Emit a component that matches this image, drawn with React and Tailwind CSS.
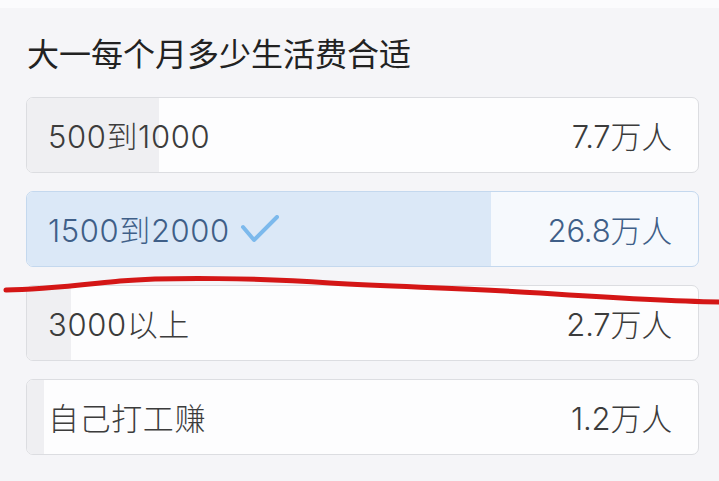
import React from "react";

const options = [
  { label: "500到1000", count: "7.7万人", fill: 132, selected: false },
  { label: "1500到2000", count: "26.8万人", fill: 464, selected: true },
  { label: "3000以上", count: "2.7万人", fill: 44, selected: false },
  { label: "自己打工赚", count: "1.2万人", fill: 17, selected: false },
];

function Check() {
  return (
    <svg width="40" height="30" viewBox="0 0 40 30" className="ml-[10px] mt-[-4px]">
      <path d="M3 12 L14 25 L37 2" fill="none" stroke="#7cb9ec" strokeWidth="4" strokeLinecap="round" strokeLinejoin="round" />
    </svg>
  );
}

function Option({ o }) {
  return (
    <div
      className={
        "relative h-[76px] rounded-[7px] border overflow-hidden " +
        (o.selected ? "border-[#c4d8ee] bg-[#f6f9fd]" : "border-[#dcdde1] bg-[#fdfdfe]")
      }
    >
      <div
        className={"absolute left-0 top-0 bottom-0 " + (o.selected ? "bg-[#dbe8f7]" : "bg-[#efeff2]")}
        style={{ width: o.fill }}
      />
      <div
        className={
          "relative flex h-full items-center justify-between pl-[21px] pr-[26px] pt-[5px] text-[31px] font-light " +
          (o.selected ? "text-[#3f5f88]" : "text-[#3c3c3c]")
        }
      >
        <div className="flex items-center">
          <span className="tracking-[0.6px]">{o.label}</span>
          {o.selected && <Check />}
        </div>
        <span className="tracking-[-0.2px]">{o.count}</span>
      </div>
    </div>
  );
}

export default function App() {
  return (
    <div
      className="relative w-[719px] h-[481px] overflow-hidden bg-[#f5f5f8]"
      style={{ fontFamily: 'Inter, "Noto Sans CJK SC", sans-serif' }}
    >
      <div className="h-[8px] bg-[#fbfbfd]" />
      <div className="pl-[26px] pr-[20px]">
        <div className="mt-[27px] h-[40px] leading-[40px] text-[32px] text-[#222222] pl-[1px]">
          大一每个月多少生活费合适
        </div>
        <div className="mt-[22px] flex flex-col gap-[18px] w-[673px]">
          {options.map((o) => (
            <Option key={o.label} o={o} />
          ))}
        </div>
      </div>
      <svg className="absolute left-0 top-0 pointer-events-none" width="719" height="481" viewBox="0 0 719 481">
        <path
          d="M6 290 C 40 290, 80 285, 120 281 C 170 277, 260 278, 330 283 C 400 287, 460 288, 540 293 C 600 297, 660 301, 719 302"
          fill="none"
          stroke="#d41616"
          strokeWidth="5"
          strokeLinecap="round"
        />
      </svg>
    </div>
  );
}
